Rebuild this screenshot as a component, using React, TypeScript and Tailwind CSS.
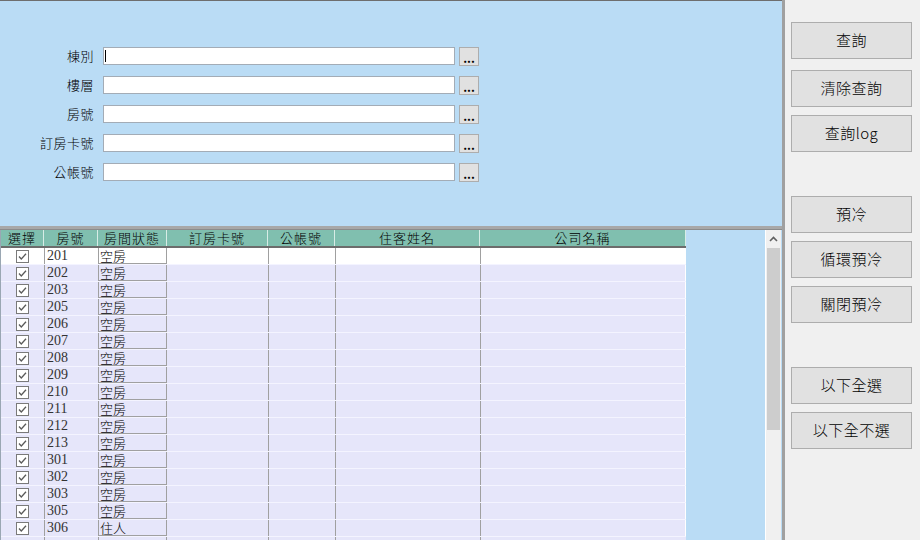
import React from "react";

const fields = ["棟別", "樓層", "房號", "訂房卡號", "公帳號"];

const columns = [
    { title: "選擇", w: "w-[43px]" },
    { title: "房號", w: "w-[54px]" },
    { title: "房間狀態", w: "w-[69px]" },
    { title: "訂房卡號", w: "w-[101px]" },
    { title: "公帳號", w: "w-[67px]" },
    { title: "住客姓名", w: "w-[145px]" },
    { title: "公司名稱", w: "w-[206px]" },
];

const rooms: [string, string][] = [
    ["201", "空房"],
    ["202", "空房"],
    ["203", "空房"],
    ["205", "空房"],
    ["206", "空房"],
    ["207", "空房"],
    ["208", "空房"],
    ["209", "空房"],
    ["210", "空房"],
    ["211", "空房"],
    ["212", "空房"],
    ["213", "空房"],
    ["301", "空房"],
    ["302", "空房"],
    ["303", "空房"],
    ["305", "空房"],
    ["306", "住人"],
];

const buttons = [
    { label: "查詢", mt: "mt-[22px]" },
    { label: "清除查詢", mt: "mt-[11px]" },
    { label: "查詢log", mt: "mt-[8px]" },
    { label: "預冷", mt: "mt-[44px]" },
    { label: "循環預冷", mt: "mt-[8px]" },
    { label: "關閉預冷", mt: "mt-[8px]" },
    { label: "以下全選", mt: "mt-[44px]" },
    { label: "以下全不選", mt: "mt-[8px]" },
];

function CheckBox() {
    return (
        <svg width="13" height="13" viewBox="0 0 13 13">
            <rect x="0.5" y="0.5" width="12" height="12" fill="#ffffff" stroke="#7a7a7a" />
            <path d="M3 6.5 L5.3 9 L10 3.8" fill="none" stroke="#5a5a5a" strokeWidth="1.3" />
        </svg>
    );
}

export default function App() {
    return (
        <div className="flex w-[920px] h-[540px] overflow-hidden bg-[#f0f0f0] font-['Noto_Sans_CJK_TC','Liberation_Sans',sans-serif] font-light text-black">
            {/* left side: query form + grid */}
            <div className="flex flex-col w-[782px] h-full">
                <div className="h-[226px] bg-[#badcf5] border-t border-[#6e6e6e] pt-[46px] flex flex-col gap-[11px]">
                    {fields.map((f, i) => (
                        <div key={f} className="flex items-center h-[18px]">
                            <div className="w-[94px] text-right text-[13px] leading-none tracking-[0.5px] -mt-[2px]">{f}</div>
                            <div className="relative ml-[9px] w-[352px] h-[18px] bg-white border border-[#a3acb6]">
                                {i === 0 && <div className="absolute left-[1px] top-[2px] w-px h-[12px] bg-black" />}
                            </div>
                            <div className="ml-[4px] w-[20px] h-[19px] bg-[#e1e1e1] border border-[#adadad] flex items-end justify-center text-[12px] leading-[14px] font-bold">
                                ...
                            </div>
                        </div>
                    ))}
                </div>
                <div className="h-[4px] bg-[#a8a8a8] border-b border-[#8c8c8c]" />

                {/* grid */}
                <div className="flex flex-1 bg-[#badcf5] min-h-0">
                    <div className="w-[765px] border-l border-[#9aa7b3]">
                        <div className="flex w-[685px] h-[18px] bg-[#80bfaf] border-b-2 border-[#6c6c6c]">
                            {columns.map((c) => (
                                <div
                                    key={c.title}
                                    className={`${c.w} border-r border-[#d8ece6] text-center text-[13px] leading-[16px] tracking-[1px]`}
                                >
                                    {c.title}
                                </div>
                            ))}
                        </div>
                        {rooms.map(([no, st], i) => (
                            <div
                                key={no}
                                className={`flex w-[685px] h-[17px] border-b border-[#f4f4ff] ${i === 0 ? "bg-white" : "bg-[#e6e6fa]"}`}
                            >
                                <div className="w-[43px] flex items-center justify-center">
                                    <CheckBox />
                                </div>
                                <div className="w-[54px] border-l border-[#a0a0a0] pl-[2px] text-[14px] leading-[16px] font-normal text-[#333] font-['Liberation_Serif','Noto_Sans_CJK_TC',serif]">
                                    {no}
                                </div>
                                <div className="w-[69px] h-[16px] border border-t-0 border-[#a0a0a0] pl-px text-[13px] leading-[15px]">{st}</div>
                                <div className="w-[101px]" />
                                <div className="w-[67px] border-l border-[#a0a0a0]" />
                                <div className="w-[145px] border-l border-[#a0a0a0]" />
                                <div className="w-[206px] border-l border-[#a0a0a0] border-r border-r-white" />
                            </div>
                        ))}
                        {/* partly visible next row */}
                        <div className="flex w-[685px] h-[17px] bg-[#e6e6fa]">
                            <div className="w-[43px]" />
                            <div className="w-[54px] border-l border-[#a0a0a0]" />
                            <div className="w-[69px] border-x border-[#a0a0a0]" />
                            <div className="w-[101px]" />
                            <div className="w-[67px] border-l border-[#a0a0a0]" />
                            <div className="w-[145px] border-l border-[#a0a0a0]" />
                            <div className="w-[206px] border-l border-[#a0a0a0]" />
                        </div>
                    </div>
                    {/* scrollbar */}
                    <div className="w-[16px] flex flex-col bg-[#f0f0f0] border-l border-white">
                        <div className="h-[18px] flex items-center justify-center">
                            <svg width="9" height="6" viewBox="0 0 9 6">
                                <path d="M1 5 L4.5 1.5 L8 5" fill="none" stroke="#606060" strokeWidth="1.6" />
                            </svg>
                        </div>
                        <div className="h-[182px] bg-[#cdcdcd] mx-px" />
                    </div>
                </div>
            </div>

            {/* splitter */}
            <div className="w-[3px] h-full bg-[#a0a0a0]" />

            {/* right side buttons */}
            <div className="flex flex-col pl-[6px]">
                {buttons.map((b) => (
                    <div
                        key={b.label}
                        className={`${b.mt} w-[121px] h-[37px] bg-[#e1e1e1] border border-[#adadad] flex items-center justify-center text-[15px] tracking-[0.5px]`}
                    >
                        {b.label}
                    </div>
                ))}
            </div>
        </div>
    );
}
